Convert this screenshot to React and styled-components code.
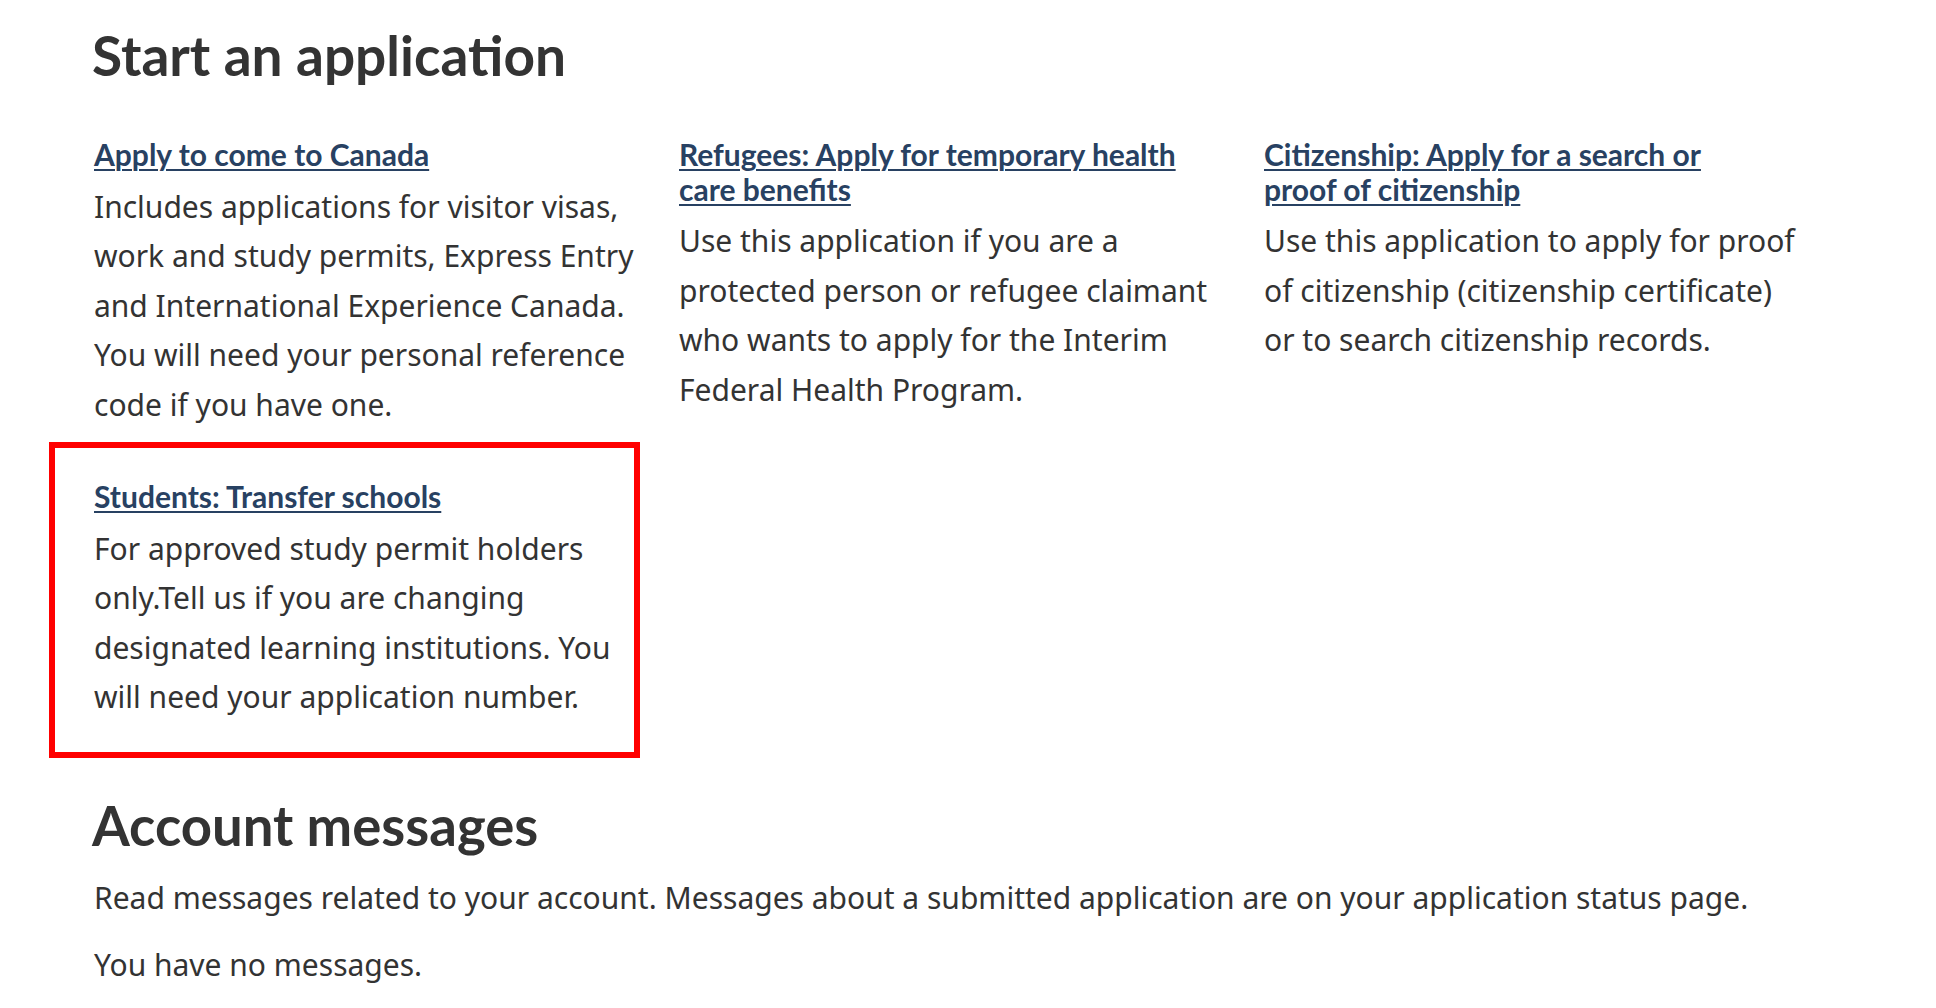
import React from "react";
import styled, { createGlobalStyle } from "styled-components";

const GlobalStyle = createGlobalStyle`
  body {
    margin: 0;
    background: #fff;
    color: #333;
    font-family: "Noto Sans", "DejaVu Sans", sans-serif;
  }
`;

const Page = styled.main`
  padding: 26px 0 0 94px;
`;

const Heading = styled.h2`
  margin: 0;
  font-family: Lato, "Liberation Sans", sans-serif;
  font-weight: 700;
  font-size: ${(p) => p.$size || 55}px;
  line-height: 58px;
  color: #333;
  margin-left: -2px;
`;

const CardGrid = styled.div`
  display: grid;
  grid-template-columns: repeat(3, 585px);
  row-gap: 7px;
  margin: 48px 0 38px -45px;
`;

const Card = styled.section`
  box-sizing: border-box;
  width: 591px;
  border: 6px solid ${(p) => (p.$highlight ? "#ff0000" : "transparent")};
  padding: ${(p) => (p.$highlight ? "32px 0 30px 39px" : "0 0 0 39px")};
`;

const CardTitle = styled.h3`
  max-width: 508px;
  margin: -1px 0 10px;
  font-family: Lato, "Liberation Sans", sans-serif;
  font-weight: 700;
  font-size: 30px;
  line-height: 34.5px;
`;

const CardLink = styled.a`
  color: #284162;
  text-decoration: underline;
  text-decoration-thickness: 2px;
  text-underline-offset: 3px;
`;

const Text = styled.p`
  margin: 0;
  font-size: 30px;
  line-height: 1.65;
  color: #333;
`;

const Paragraph = styled(Text)`
  margin-top: ${(p) => p.$gap || 0}px;
`;

const cards = [
  {
    title: "Apply to come to Canada",
    text: "Includes applications for visitor visas, work and study permits, Express Entry and International Experience Canada. You will need your personal reference code if you have one.",
  },
  {
    title: "Refugees: Apply for temporary health care benefits",
    text: "Use this application if you are a protected person or refugee claimant who wants to apply for the Interim Federal Health Program.",
  },
  {
    title: "Citizenship: Apply for a search or proof of citizenship ",
    text: "Use this application to apply for proof of citizenship (citizenship certificate) or to search citizenship records.",
  },
  {
    title: "Students: Transfer schools",
    text: "For approved study permit holders only.Tell us if you are changing designated learning institutions. You will need your application number.",
    highlight: true,
  },
];

export default function App() {
  return (
    <>
      <GlobalStyle />
      <Page>
        <Heading $size={55}>Start an application</Heading>
        <CardGrid>
          {cards.map((c) => (
            <Card key={c.title} $highlight={c.highlight}>
              <CardTitle>
                <CardLink href="#">{c.title}</CardLink>
              </CardTitle>
              <Text>{c.text}</Text>
            </Card>
          ))}
        </CardGrid>
        <Heading $size={54.5}>Account messages</Heading>
        <Paragraph $gap={19}>
          Read messages related to your account. Messages about a submitted
          application are on your application status page.
        </Paragraph>
        <Paragraph $gap={18}>You have no messages.</Paragraph>
      </Page>
    </>
  );
}
